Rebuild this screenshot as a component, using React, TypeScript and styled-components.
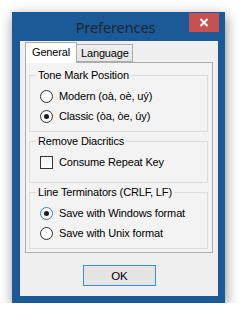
import React from "react";
import styled, { createGlobalStyle } from "styled-components";

const Global = createGlobalStyle`
  html, body { margin: 0; padding: 0; background: #ffffff; }
  body { font-family: "Liberation Sans", Arial, sans-serif; }
`;

const Page = styled.div`
  padding: 12px 0 0 12px;
`;

const Window = styled.div`
  width: 213px;
  background: #1b5a97;
  box-shadow: 1px 4px 12px rgba(0, 0, 0, 0.45);
  padding: 0 7px 7px 8px;
  box-sizing: border-box;
`;

const TitleBar = styled.div`
  height: 29px;
  display: grid;
  grid-template-columns: 1fr auto 1fr;
  align-items: start;
  margin: 0 -1px 0 -8px;
`;

const Title = styled.div`
  grid-column: 2;
  font-family: "Noto Sans", "Open Sans", sans-serif;
  font-size: 14.5px;
  line-height: 18px;
  margin-top: 6px;
  color: #1d2733;
  letter-spacing: -0.1px;
`;

const CloseButton = styled.div`
  grid-column: 3;
  justify-self: end;
  margin-top: 1px;
  width: 30px;
  height: 19px;
  background: #c75050;
  display: flex;
  align-items: center;
  justify-content: center;
`;

const Client = styled.div`
  background: #f0f0f0;
  padding: 1px 5px 10px 5px;
  display: flex;
  flex-direction: column;
  font-size: 11px;
  letter-spacing: -0.15px;
  color: #000;
`;

const TabStrip = styled.div`
  display: flex;
  align-items: flex-end;
  height: 20px;
`;

const Tab = styled.div<{ $active?: boolean }>`
  box-sizing: border-box;
  width: ${(p) => (p.$active ? "52px" : "56px")};
  height: ${(p) => (p.$active ? "21px" : "18px")};
  margin-bottom: ${(p) => (p.$active ? "-1px" : "0")};
  position: relative;
  z-index: ${(p) => (p.$active ? 1 : 0)};
  border: 1px solid #adadad;
  border-bottom: ${(p) => (p.$active ? "none" : "1px solid #adadad")};
  border-left: ${(p) => (p.$active ? "1px solid #adadad" : "none")};
  background: ${(p) => (p.$active ? "#ffffff" : "linear-gradient(#f0f0f0, #e5e5e5)")};
  padding: ${(p) => (p.$active ? "3px 0 0 6px" : "2px 0 0 4px")};
  line-height: 13px;
`;

const Panel = styled.div`
  border: 1px solid #adadad;
  background: #f3f3f3;
  padding: 6px 4px 3px 3px;
  display: flex;
  flex-direction: column;
  gap: 3px;
`;

const Group = styled.fieldset<{ $extra?: number }>`
  margin: 0;
  min-width: 0;
  border: 1px solid #dcdcdc;
  padding: 4px 6px ${(p) => 5 + (p.$extra ?? 0)}px 6px;
`;

const Legend = styled.legend`
  padding: 0 2px;
  line-height: 13px;
  font-size: 11px;
`;

const Row = styled.div`
  height: 20px;
  display: flex;
  align-items: center;
  gap: 6px;
  padding-left: 4px;
`;

const Radio = styled.span<{ $checked?: boolean; $focus?: boolean }>`
  box-sizing: border-box;
  width: 13px;
  height: 13px;
  border-radius: 50%;
  border: 1px solid ${(p) => (p.$focus ? "#3c7fb1" : "#333333")};
  background: radial-gradient(circle at 50% 40%, #ffffff 40%, #e8e8e8 100%);
  display: flex;
  align-items: center;
  justify-content: center;
  flex: none;
  &::after {
    content: "";
    width: 5px;
    height: 5px;
    border-radius: 50%;
    background: #1a1a1a;
    display: ${(p) => (p.$checked ? "block" : "none")};
  }
`;

const Check = styled.span`
  box-sizing: border-box;
  width: 13px;
  height: 13px;
  border: 1px solid #333333;
  background: linear-gradient(#f4f4f4, #ffffff);
  flex: none;
`;

const Label = styled.span`
  line-height: 13px;
  white-space: nowrap;
`;

const Footer = styled.div`
  display: flex;
  justify-content: center;
  margin-top: 12px;
`;

const Button = styled.div`
  box-sizing: border-box;
  width: 73px;
  height: 21px;
  border: 1px solid #3c8fe6;
  background: #e5e5e5;
  display: flex;
  align-items: center;
  justify-content: center;
  font-size: 11.5px;
  margin-left: 1px;
`;

export default function App() {
  return (
    <>
      <Global />
      <Page>
        <Window>
          <TitleBar>
            <Title>Preferences</Title>
            <CloseButton>
              <svg width="10" height="9" viewBox="0 0 10 9">
                <path d="M1.5 1 L8.5 8 M8.5 1 L1.5 8" stroke="#ffffff" strokeWidth="2" />
              </svg>
            </CloseButton>
          </TitleBar>
          <Client>
            <TabStrip>
              <Tab $active>General</Tab>
              <Tab>Language</Tab>
            </TabStrip>
            <Panel>
              <Group>
                <Legend>Tone Mark Position</Legend>
                <Row>
                  <Radio />
                  <Label>Modern (oà, oè, uý)</Label>
                </Row>
                <Row>
                  <Radio $checked />
                  <Label>Classic (òa, òe, úy)</Label>
                </Row>
              </Group>
              <Group $extra={5}>
                <Legend>Remove Diacritics</Legend>
                <Row>
                  <Check />
                  <Label>Consume Repeat Key</Label>
                </Row>
              </Group>
              <Group>
                <Legend>Line Terminators (CRLF, LF)</Legend>
                <Row>
                  <Radio $checked $focus />
                  <Label>Save with Windows format</Label>
                </Row>
                <Row>
                  <Radio />
                  <Label>Save with Unix format</Label>
                </Row>
              </Group>
            </Panel>
            <Footer>
              <Button>OK</Button>
            </Footer>
          </Client>
        </Window>
      </Page>
    </>
  );
}
